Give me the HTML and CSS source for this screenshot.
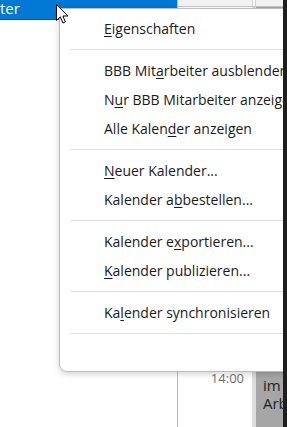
FILE: index.html
```html
<!DOCTYPE html>
<html lang="de">
<head>
    <meta charset="UTF-8">
    <meta name="viewport" content="width=device-width, initial-scale=1.0">
    <title>Kalender Kontextmenü</title>
    <link rel="stylesheet" href="styles.css">
</head>
<body>

    <div class="screen">
        <!-- linke Spalte mit ausgewähltem Kalender -->
        <div class="nav">
            <div class="sel-bar">ter</div>
        </div>

        <!-- Tagesansicht -->
        <div class="cal">
            <div class="hd"></div>
            <div class="hd-sep"></div>
            <div class="hd"></div>
            <div class="times"><span class="time">14:00</span></div>
            <div class="gap"></div>
            <div class="appt">im Arbeit</div>
        </div>

        <!-- Kontextmenü -->
        <div class="menu">
            <div class="item"><u>E</u>igenschaften</div>
            <div class="sep"></div>
            <div class="item">BBB Mit<u>a</u>rbeiter ausblenden</div>
            <div class="item">N<u>u</u>r BBB Mitarbeiter anzeigen</div>
            <div class="item">Alle Kalen<u>d</u>er anzeigen</div>
            <div class="sep"></div>
            <div class="item"><u>N</u>euer Kalender...</div>
            <div class="item">Kalender a<u>b</u>bestellen...</div>
            <div class="sep"></div>
            <div class="item">Kalender e<u>x</u>portieren...</div>
            <div class="item"><u>K</u>alender publizieren...</div>
            <div class="sep"></div>
            <div class="item">Ka<u>l</u>ender synchronisieren</div>
            <div class="sep"></div>
            <div class="spacer"></div>
        </div>

        <svg class="cursor" width="14" height="22" viewBox="0 0 14 22">
            <path d="M0.5 0.5 L0.5 16.5 L4.3 12.9 L6.9 19 L9.4 17.9 L6.9 12 L12 12 Z" fill="#fff" stroke="#000" stroke-width="1" stroke-linejoin="miter"/>
        </svg>
    </div>
    <div class="frame"></div>

</body>
</html>
```

FILE: styles.css
```css
body {
    margin: 0;
    height: 427px;
    display: flex;
    overflow: hidden;
    background-color: #fff;
    font-family: "Open Sans", "Noto Sans", sans-serif;
}
.screen {
    width: 283px;
    position: relative;
    overflow: hidden;
    display: flex;
}
.frame {
    width: 4px;
    background-color: #1e1e1e;
}
.nav {
    width: 177px;
}
.sel-bar {
    height: 20px;
    background-color: #0078d4;
    color: #fff;
    font-size: 15px;
    line-height: 16px;
    border-bottom: 1px solid #2a4a6a;
    box-sizing: border-box;
}
.cal {
    flex: 1;
    border-left: 1px solid #b6bcc4;
    display: grid;
    grid-template-columns: 74px 4px 1fr;
    grid-template-rows: 7px 1fr;
}
.hd {
    background-color: #f2f2f2;
    border-bottom: 1px solid #c9c9c9;
}
.hd-sep {
    background-color: #fafafa;
    border-left: 1px solid #d2d2d2;
    border-right: 1px solid #d2d2d2;
    border-bottom: 1px solid #c9c9c9;
}
.times {
    padding-top: 359px;
    padding-right: 8px;
    text-align: right;
}
.time {
    font-size: 13px;
    line-height: 16px;
    color: #707070;
}
.gap {
    background-color: #dcdcdc;
}
.appt {
    background-color: #a6a6a6;
    color: #222;
    font-size: 15px;
    line-height: 18px;
    padding: 369px 0 0 7px;
    overflow: hidden;
}
.menu {
    position: absolute;
    left: 59px;
    top: 8px;
    width: 240px;
    padding: 5px 0;
    background-color: #fff;
    border: 1px solid #bdbdbd;
    border-radius: 3px 8px 8px 8px;
    box-shadow: 0 2px 6px rgba(0, 0, 0, 0.18);
}
.item {
    height: 29px;
    line-height: 29px;
    padding-left: 44px;
    font-size: 14px;
    color: #1a1a1a;
    white-space: nowrap;
}
.item u {
    text-underline-offset: 2px;
}
.sep {
    height: 1px;
    margin: 6px 0 6px 10px;
    background-color: #e1e1e1;
}
.spacer {
    height: 26px;
}
.cursor {
    position: absolute;
    left: 56px;
    top: 4px;
}
```
